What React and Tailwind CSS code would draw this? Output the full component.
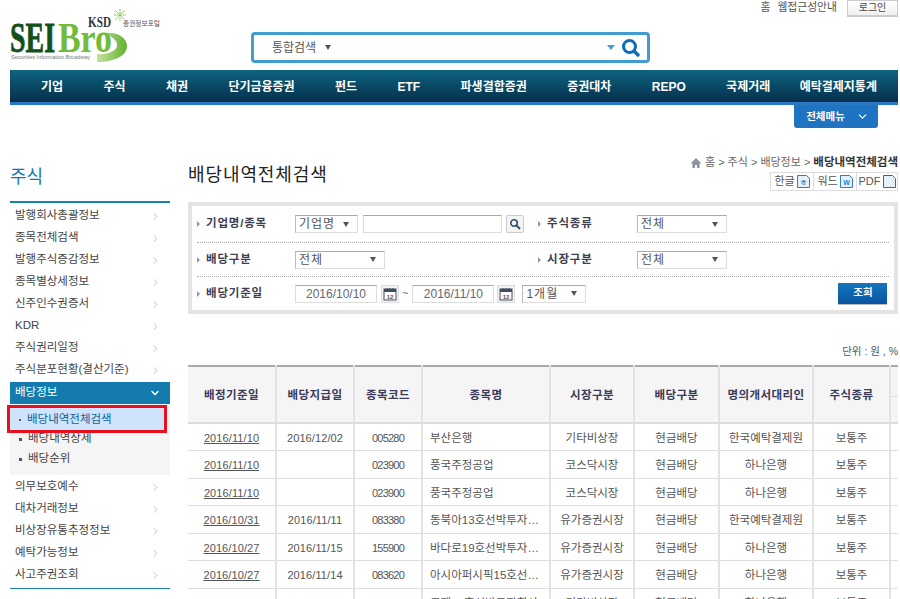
import React from "react";
import { ChevronRight, ChevronDown } from "lucide-react";

const FONT = "font-['Liberation_Sans','Noto_Sans_CJK_KR',sans-serif]";

const navItems = ["기업", "주식", "채권", "단기금융증권", "펀드", "ETF", "파생결합증권", "증권대차", "REPO", "국제거래", "예탁결제지통계"];

const menuTop = ["발행회사총괄정보", "종목전체검색", "발행주식증감정보", "종목별상세정보", "신주인수권증서", "KDR", "주식권리일정", "주식분포현황(결산기준)"];
const menuBottom = ["의무보호예수", "대차거래정보", "비상장유통추정정보", "예탁가능정보", "사고주권조회"];

const rows = [
  ["2016/11/10", "2016/12/02", "005280", "부산은행", "기타비상장", "현금배당", "한국예탁결제원", "보통주"],
  ["2016/11/10", "", "023900", "풍국주정공업", "코스닥시장", "현금배당", "하나은행", "보통주"],
  ["2016/11/10", "", "023900", "풍국주정공업", "코스닥시장", "현금배당", "하나은행", "보통주"],
  ["2016/10/31", "2016/11/11", "083380", "동북아13호선박투자…", "유가증권시장", "현금배당", "한국예탁결제원", "보통주"],
  ["2016/10/27", "2016/11/15", "155900", "바다로19호선박투자…", "유가증권시장", "현금배당", "하나은행", "보통주"],
  ["2016/10/27", "2016/11/14", "083620", "아시아퍼시픽15호선…", "유가증권시장", "현금배당", "하나은행", "보통주"],
  ["2016/10/18", "", "060310", "국제12호선박투자회사", "기타비상장", "현금배당", "하나은행", "보통주"],
];

const headers = ["배정기준일", "배당지급일", "종목코드", "종목명", "시장구분", "배당구분", "명의개서대리인", "주식종류"];

const Logo = () => (
  <svg width="152" height="58" viewBox="0 0 152 58" className="block">
    <defs>
      <linearGradient id="ring" x1="0" y1="0" x2="1" y2="0">
        <stop offset="0" stopColor="#c6e29a" />
        <stop offset="1" stopColor="#62b032" />
      </linearGradient>
    </defs>
    <path d="M92 25 C108 23 117 30 117 38 C117 48 104 54 87 54 L87 46 C100 47 108 42 107 36 C106 31 100 27 92 25 Z" fill="url(#ring)" />
    <text x="0" y="44" fontFamily="Liberation Serif" fontWeight="700" fontSize="42" fill="#14501c" stroke="#14501c" strokeWidth="0.8" textLength="45" lengthAdjust="spacingAndGlyphs">SEI</text>
    <text x="48" y="44" fontFamily="Liberation Serif" fontWeight="700" fontSize="42" fill="#74bb3a" textLength="54" lengthAdjust="spacingAndGlyphs">Bro</text>
    <text x="1" y="51" fontFamily="Liberation Sans" fontSize="6" fill="#777" textLength="79" lengthAdjust="spacingAndGlyphs">Securities Information Broadway</text>
    <text x="78" y="19" fontFamily="Liberation Serif" fontWeight="700" fontSize="14" fill="#333" textLength="23" lengthAdjust="spacingAndGlyphs">KSD</text>
    <text x="113" y="18" fontFamily="Noto Sans CJK KR" fontSize="6.5" fill="#555" textLength="37" lengthAdjust="spacingAndGlyphs">증권정보포털</text>
    <g stroke="#6dbb3a" strokeWidth="1" strokeDasharray="1.8 1">
      <path d="M110 1 L110 13" />
      <path d="M104 7 L116 7" />
      <path d="M105.5 2.5 L114.5 11.5" />
      <path d="M114.5 2.5 L105.5 11.5" />
    </g>
  </svg>
);

const TopBar = () => (
  <header className="h-[70px] flex">
    <div className="pl-[10px] pt-[8px]">
      <Logo />
    </div>
    <div className="ml-[89px] mt-[32px] w-[399px] h-[31px] border-[3px] border-[#419ccf] rounded-[4px] flex items-center pl-[18px] pr-[6px] text-[12px] text-[#555]">
      <span>통합검색</span>
      <span className="ml-[9px] w-0 h-0 border-x-[3px] border-x-transparent border-t-[5px] border-t-[#555]" />
      <span className="ml-auto mr-[6px] w-0 h-0 border-x-[4px] border-x-transparent border-t-[5px] border-t-[#4b9dcd]" />
      <svg width="20" height="20" viewBox="0 0 20 20" fill="none" stroke="#0f6cbd">
        <circle cx="8.5" cy="8.5" r="6" strokeWidth="3" />
        <path d="M13 13 L18 18" strokeWidth="3.4" />
      </svg>
    </div>
    <div className="ml-auto mr-[2px] flex items-start text-[10.8px] text-[#555]">
      <span className="mt-[-1px]">홈</span>
      <span className="ml-[7px] mt-[-1px]">웹접근성안내</span>
      <button className="ml-[10px] w-[51px] h-[17px] border border-[#ccc] border-b-2 bg-gradient-to-b from-white to-[#f0f0f0] text-[10px] text-[#444] leading-[14px]">로그인</button>
    </div>
  </header>
);

const NavBar = () => (
  <nav className="ml-[10px] mr-[2px]">
    <div className="h-[35px] border-b-[3px] border-[#2a78c4] bg-gradient-to-b from-[#0f6480] to-[#06304c] pt-[2px] pl-[31px] pr-[21px] flex items-center justify-between text-[12px] font-bold text-white">
      {navItems.map((n, i) => (
        <span key={n} className={i === navItems.length - 1 ? "-ml-[11px]" : ""}>{n}</span>
      ))}
    </div>
    <div className="flex justify-end pr-[20px]">
      <div className="w-[84px] h-[23px] bg-[#1f74c1] rounded-b-[3px] flex items-center justify-center gap-[11px] pl-[3px] text-[10.5px] font-bold text-white">
        <span>전체메뉴</span>
        <ChevronDown size={13} strokeWidth={2} />
      </div>
    </div>
  </nav>
);

const MenuItem = ({ label }) => (
  <li className="h-[22px] flex items-center justify-between pl-[5px] pr-[9px] text-[11.5px] text-[#444]">
    <span>{label}</span>
    <ChevronRight size={11} className="text-[#bbb]" />
  </li>
);

const Sidebar = () => (
  <aside className="w-[160px] shrink-0">
    <h2 className="h-[46px] pt-[10px] text-[18px] leading-[24px] text-[#127aad]">주식</h2>
    <div className="border-t-2 border-[#1a82b2] pt-[2px]">
      <ul>
        {menuTop.map((m) => (
          <MenuItem key={m} label={m} />
        ))}
      </ul>
      <div className="h-[22px] mt-[1px] bg-[#137bad] flex items-center justify-between pl-[5px] pr-[9px] text-[11.5px] text-white">
        <span>배당정보</span>
        <ChevronDown size={12} strokeWidth={3} />
      </div>
      <ul className="bg-[#f5f5f5] h-[71px] relative pt-[25px] text-[11.5px] text-[#444]">
        <li className="absolute left-[-3px] top-[1px] w-[160px] h-[28px] border-[3px] border-[#e60f1e] bg-[#cfe3fb] flex items-center pl-[9px] pt-[1px] text-[#0d5f9b]">
          <span className="w-[2px] h-[2px] bg-[#555] mr-[6px]" />
          배당내역전체검색
        </li>
        {["배당내역상세", "배당순위"].map((s) => (
          <li key={s} className="h-[20px] flex items-center pl-[9px]">
            <span className="w-[3px] h-[3px] bg-[#555] mr-[6px]" />
            {s}
          </li>
        ))}
      </ul>
      <ul className="mt-[1px]">
        {menuBottom.map((m) => (
          <MenuItem key={m} label={m} />
        ))}
      </ul>
      <div className="mt-[2px] border-t border-[#1a82b2]" />
    </div>
  </aside>
);

const Select = ({ label, className }) => (
  <div className={`h-[18px] border border-[#ddd] border-t-[#aaa] border-l-[#bbb] bg-white flex items-center justify-between pl-[3px] pr-[8px] text-[12px] tracking-[1px] text-[#555] ${className}`}>
    <span>{label}</span>
    <span className="w-0 h-0 border-x-[3px] border-x-transparent border-t-[5px] border-t-[#555]" />
  </div>
);

const Label = ({ children, className = "w-[98px]" }) => (
  <div className={`flex items-center shrink-0 text-[11.5px] font-bold tracking-[0.8px] text-[#3f3f50] ${className}`}>
    <span className="mr-[6px] w-0 h-0 border-y-[3px] border-y-transparent border-l-[3px] border-l-[#8a9bb0]" />
    {children}
  </div>
);

const CalIcon = () => (
  <span className="w-[18px] h-[18px] border border-[#ddd] bg-[#f3f3f3] flex items-center justify-center shrink-0">
    <svg width="14" height="14" viewBox="0 0 14 14">
      <rect x="1" y="2" width="12" height="11" fill="#fff" stroke="#3f4f60" />
      <rect x="1" y="2" width="12" height="3" fill="#3f4f60" />
      <path d="M4 1v2M7 1v2M10 1v2" stroke="#3f4f60" />
      <text x="7" y="11.5" textAnchor="middle" fontFamily="Liberation Sans" fontSize="6" fontWeight="700" fill="#556">12</text>
    </svg>
  </span>
);

const DateInput = ({ value }) => (
  <div className="w-[82px] h-[18px] border border-[#ddd] border-t-[#aaa] flex items-center justify-center text-[12px] text-[#667]">{value}</div>
);

const DocIcon = ({ color, label }) => (
  <svg width="13" height="13" viewBox="0 0 13 13" className="ml-[2px]">
    <path d="M0.5 0.5H9.5L12.5 3.5V12.5H0.5Z" fill="#e4f1fb" stroke={color} />
    <text x="6.5" y="10" textAnchor="middle" fontFamily="Liberation Sans" fontSize="7" fontWeight="700" fill={color}>{label}</text>
  </svg>
);

const SearchBox = () => (
  <div className="h-[112px] border-[4px] border-[#e4e4e4] px-[5px] text-[12px]">
    <div className="h-[37px] border-b border-dotted border-[#aaa] flex items-center">
      <Label>기업명/종목</Label>
      <Select label="기업명" className="w-[63px]" />
      <div className="ml-[5px] w-[139px] h-[18px] border border-[#ddd] border-t-[#aaa]" />
      <button className="ml-[4px] w-[18px] h-[18px] border border-[#ccc] rounded-[2px] bg-[#f4f4f4] flex items-center justify-center">
        <svg width="12" height="12" viewBox="0 0 12 12" fill="none" stroke="#35506a">
          <circle cx="5" cy="5" r="3.2" strokeWidth="1.6" />
          <path d="M7.5 7.5L11 11" strokeWidth="2" />
        </svg>
      </button>
      <Label className="ml-[14px] w-[99px]">주식종류</Label>
      <Select label="전체" className="w-[90px]" />
    </div>
    <div className="h-[34px] border-b border-dotted border-[#aaa] flex items-center">
      <Label>배당구분</Label>
      <Select label="전체" className="w-[90px]" />
      <Label className="ml-[153px] w-[99px]">시장구분</Label>
      <Select label="전체" className="w-[90px]" />
    </div>
    <div className="h-[33px] flex items-center">
      <Label>배당기준일</Label>
      <DateInput value="2016/10/10" />
      <span className="ml-[4px]"><CalIcon /></span>
      <span className="mx-[3px] text-[11px] text-[#666]">~</span>
      <span className="ml-[1px]"><DateInput value="2016/11/10" /></span>
      <span className="ml-[3px]"><CalIcon /></span>
      <Select label="1개월" className="ml-[7px] w-[64px]" />
      <button className="ml-[252px] w-[49px] h-[22px] bg-gradient-to-b from-[#1476bd] to-[#0a54a0] border-b border-[#bbb] text-[10.5px] font-bold text-white">조회</button>
    </div>
  </div>
);

const ResultTable = () => (
  <table className="w-[710px] table-fixed border-collapse border-t-2 border-[#aaa] text-[11.5px] leading-[16px] text-[#555]">
    <colgroup>
      <col className="w-[88px]" />
      <col className="w-[78px]" />
      <col className="w-[68px]" />
      <col className="w-[128px]" />
      <col className="w-[84px]" />
      <col className="w-[85px]" />
      <col className="w-[94px]" />
      <col className="w-[77px]" />
      <col className="w-[8px]" />
    </colgroup>
    <thead>
      <tr className="h-[57px] bg-[#f5f5f5]">
        {headers.map((h, i) => (
          <th key={h} className={`pt-[1px] font-bold tracking-[0.4px] text-[#3a3a5a] border-b-2 border-[#ddd] ${i > 0 ? "border-l-2 border-l-[#e2e2e2]" : ""}`}>{h}</th>
        ))}
        <th className="border-l-2 border-l-[#e2e2e2] border-b-2 border-[#ddd] p-0 align-top">
          <div className="h-[30px] border-b border-[#ddd]" />
        </th>
      </tr>
    </thead>
    <tbody>
      {rows.map((r, i) => (
        <tr key={i} className="h-[27.5px] border-b border-[#ddd]">
          {r.map((c, j) => (
            <td
              key={j}
              className={`pt-[2px] whitespace-nowrap overflow-hidden ${j === 3 ? "text-left pl-[7px]" : "text-center"} ${j > 0 ? "border-l-2 border-l-[#e2e2e2]" : ""} ${j === 0 ? "underline" : ""} ${j < 2 ? "text-[11px] tracking-[0.1px]" : ""} ${j === 2 ? "text-[11px] tracking-[-0.8px]" : ""}`}
            >
              {c}
            </td>
          ))}
          <td className="border-l-2 border-l-[#e2e2e2]" />
        </tr>
      ))}
    </tbody>
  </table>
);

const Content = () => (
  <main className="ml-[18px] w-[710px]">
    <div className="relative h-[47px]">
      <h1 className="pt-[8px] text-[18px] leading-[24px] tracking-[0.9px] text-[#222]">배당내역전체검색</h1>
      <div className="absolute right-0 top-[-1px] flex items-center text-[11px] text-[#666]">
        <svg width="12" height="12" viewBox="0 0 12 12" className="mr-[3px]">
          <path d="M6 1L0.5 6.5H2.5V11H5V8H7V11H9.5V6.5H11.5Z" fill="#8b949c" />
        </svg>
        <span>홈 &gt; 주식 &gt; 배당정보 &gt; </span>
        <span className="ml-[3px] text-[11.5px] font-bold text-[#333]">배당내역전체검색</span>
      </div>
      <div className="absolute right-0 top-[17px] h-[19px] w-[128px] border border-[#ddd] flex text-[11px] text-[#555]">
        <span className="w-[43px] border-r border-[#ddd] flex items-center justify-center">한글<DocIcon color="#2b7fc4" label="ㅎ" /></span>
        <span className="w-[43px] border-r border-[#ddd] flex items-center justify-center">워드<DocIcon color="#2b7fc4" label="W" /></span>
        <span className="flex-1 flex items-center justify-center">PDF<DocIcon color="#1f6fb5" label="" /></span>
      </div>
    </div>
    <SearchBox />
    <div className="h-[51px] flex items-end justify-end pb-[5px] text-[10.5px] text-[#555]">단위 : 원 , %</div>
    <ResultTable />
  </main>
);

export default function App() {
  return (
    <div className={`w-[900px] h-[599px] overflow-hidden bg-white ${FONT}`}>
      <TopBar />
      <NavBar />
      <div className="flex pl-[10px] pt-[27px]">
        <Sidebar />
        <Content />
      </div>
    </div>
  );
}
